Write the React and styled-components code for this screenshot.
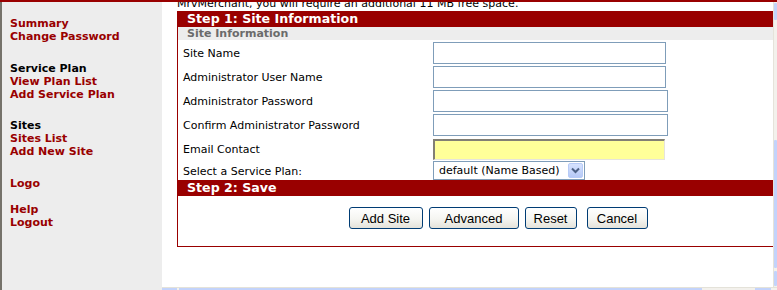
import React from 'react';
import styled, { createGlobalStyle } from 'styled-components';

const GlobalStyle = createGlobalStyle`
  html, body {
    margin: 0;
    padding: 0;
    background: #fff;
    overflow: hidden;
  }
  body {
    font-family: "DejaVu Sans", Verdana, sans-serif;
    font-size: 11px;
  }
`;

const Page = styled.div`
  width: 777px;
  height: 290px;
  box-sizing: border-box;
  border-top: 2px solid #990000;
  display: flex;
  flex-direction: column;
`;

const Body = styled.div`
  flex: 1;
  display: flex;
  min-height: 0;
`;

const Sidebar = styled.nav`
  width: 162px;
  flex-shrink: 0;
  box-sizing: border-box;
  background: #ededed;
  border-left: 2px solid #75726a;
  padding: 15px 0 0 8px;
`;

const MenuGroup = styled.div`
  margin-bottom: ${p => p.$after}px;
`;

const MenuHead = styled.div`
  font-weight: bold;
  color: #000;
  line-height: 13px;
`;

const MenuLink = styled.a`
  display: block;
  font-weight: bold;
  color: #990000;
  line-height: 13px;
  text-decoration: none;
`;

const Frame = styled.div`
  flex: 1;
  min-width: 0;
  display: flex;
  flex-direction: column;
`;

const FrameRow = styled.div`
  flex: 1;
  display: flex;
  min-height: 0;
`;

const Viewport = styled.div`
  flex: 1;
  min-width: 0;
  overflow: hidden;
  padding-left: 15px;
  background: #fff;
`;

/* the frame is scrolled a little, so this line is cut at the top */
const Notice = styled.p`
  margin: -5px 0 1px;
  line-height: 13px;
  white-space: nowrap;
`;

const Box = styled.div`
  width: 642px;
  box-sizing: border-box;
  border: 1px solid #990000;
  border-top: none;
`;

const StepHeader = styled.div`
  height: 16px;
  line-height: 16px;
  background: #990000;
  color: #fff;
  font-weight: bold;
  font-size: 12.6px;
  padding-left: 9px;
`;

const SubHeader = styled.div`
  height: 13px;
  line-height: 13px;
  background: #ededed;
  color: #6b6b6b;
  font-weight: bold;
  padding-left: 9px;
`;

const FormRow = styled.div`
  display: flex;
  align-items: flex-end;
  height: ${p => p.$h}px;
  padding-left: 5px;
`;

const Label = styled.label`
  width: 250px;
  align-self: center;
  padding-top: 2px;
  line-height: 13px;
  color: #000;
`;

const TextInput = styled.input`
  width: ${p => p.$w}px;
  height: 22px;
  box-sizing: border-box;
  border: 1px solid #7f9db9;
  background: #fff;
  padding: 0 3px;
  margin: 0;
  font: 11px "DejaVu Sans", Verdana, sans-serif;
  outline: none;
`;

const EmailInput = styled(TextInput)`
  height: 21px;
  background: #ffff99;
  border-width: 2px 1px 1px 2px;
  border-style: solid;
  border-color: #827f74 #e6e4dc #e6e4dc #827f74;
`;

const SelectBox = styled.div`
  display: flex;
  align-items: center;
  width: 152px;
  height: 19px;
  box-sizing: border-box;
  border: 1px solid #7f9db9;
  background: #fff;
`;

const SelectText = styled.span`
  flex: 1;
  padding-left: 5px;
  line-height: 17px;
  white-space: nowrap;
`;

const SelectArrow = styled.span`
  width: 15px;
  height: 15px;
  margin-right: 1px;
  box-sizing: border-box;
  border: 1px solid #b7cbf7;
  border-radius: 2px;
  background: linear-gradient(#d6e2fe, #b6c9f6);
  display: flex;
  align-items: center;
  justify-content: center;
`;

const ButtonRow = styled.div`
  display: flex;
  justify-content: center;
  padding: 11px 0 17px;
`;

const Button = styled.button`
  width: ${p => p.$w}px;
  height: 22px;
  margin-left: ${p => p.$ml || 0}px;
  padding: 0;
  box-sizing: border-box;
  border: 1px solid #003c74;
  border-radius: 3px;
  background: linear-gradient(#ffffff, #f5f5f1 55%, #e4e2da);
  color: #000;
  font: 13px "Liberation Sans", Arial, sans-serif;
`;

const VScroll = styled.div`
  width: 4px;
  box-sizing: border-box;
  border-left: 1px solid #e5e3da;
  background: #f3f1ec;
  display: flex;
  flex-direction: column;
`;

const ScrollPiece = styled.div`
  height: ${p => p.$h}px;
  margin-top: ${p => p.$mt}px;
  background: #c3d3fb;
  border-radius: 1px;
`;

const HScroll = styled.div`
  height: 3px;
  box-sizing: border-box;
  border-top: 1px solid #e4e2d9;
  background: #f3f1ec;
  display: flex;
`;

const HPiece = styled.div`
  width: ${p => p.$w}px;
  margin-left: ${p => p.$ml}px;
  background: #c3d3fb;
`;

const Chevron = () => (
  <svg width="9" height="7" viewBox="0 0 9 7">
    <polyline points="1,1.5 4.5,5 8,1.5" fill="none" stroke="#4d6185" strokeWidth="2" />
  </svg>
);

const fields = [
  { label: 'Site Name', w: 233 },
  { label: 'Administrator User Name', w: 233 },
  { label: 'Administrator Password', w: 235, type: 'password' },
  { label: 'Confirm Administrator Password', w: 235, type: 'password' },
];

export default function App() {
  return (
    <>
      <GlobalStyle />
      <Page>
        <Body>
          <Sidebar>
            <MenuGroup $after={19}>
              <MenuLink href="#">Summary</MenuLink>
              <MenuLink href="#">Change Password</MenuLink>
            </MenuGroup>
            <MenuGroup $after={18}>
              <MenuHead>Service Plan</MenuHead>
              <MenuLink href="#">View Plan List</MenuLink>
              <MenuLink href="#">Add Service Plan</MenuLink>
            </MenuGroup>
            <MenuGroup $after={19}>
              <MenuHead>Sites</MenuHead>
              <MenuLink href="#">Sites List</MenuLink>
              <MenuLink href="#">Add New Site</MenuLink>
            </MenuGroup>
            <MenuGroup $after={13}>
              <MenuLink href="#">Logo</MenuLink>
            </MenuGroup>
            <MenuGroup $after={0}>
              <MenuLink href="#">Help</MenuLink>
              <MenuLink href="#">Logout</MenuLink>
            </MenuGroup>
          </Sidebar>
          <Frame>
            <FrameRow>
              <Viewport>
                <Notice>MrvMerchant, you will require an additional 11 MB free space.</Notice>
                <Box>
                  <StepHeader>Step 1: Site Information</StepHeader>
                  <SubHeader>Site Information</SubHeader>
                  {fields.map(f => (
                    <FormRow key={f.label} $h={24}>
                      <Label>{f.label}</Label>
                      <TextInput $w={f.w} type={f.type || 'text'} />
                    </FormRow>
                  ))}
                  <FormRow $h={24}>
                    <Label>Email Contact</Label>
                    <EmailInput $w={232} type="text" />
                  </FormRow>
                  <FormRow $h={20}>
                    <Label>Select a Service Plan:</Label>
                    <SelectBox>
                      <SelectText>default (Name Based)</SelectText>
                      <SelectArrow><Chevron /></SelectArrow>
                    </SelectBox>
                  </FormRow>
                  <StepHeader>Step 2: Save</StepHeader>
                  <ButtonRow>
                    <Button $w={74}>Add Site</Button>
                    <Button $w={90} $ml={6}>Advanced</Button>
                    <Button $w={52} $ml={6}>Reset</Button>
                    <Button $w={61} $ml={10}>Cancel</Button>
                  </ButtonRow>
                </Box>
              </Viewport>
              <VScroll>
                <ScrollPiece $mt={1} $h={17} />
                <ScrollPiece $mt={120} $h={128} />
                <ScrollPiece $mt={3} $h={15} />
              </VScroll>
            </FrameRow>
            <HScroll>
              <HPiece $w={15} $ml={0} />
              <HPiece $w={523} $ml={2} />
              <HPiece $w={16} $ml={53} />
            </HScroll>
          </Frame>
        </Body>
      </Page>
    </>
  );
}
